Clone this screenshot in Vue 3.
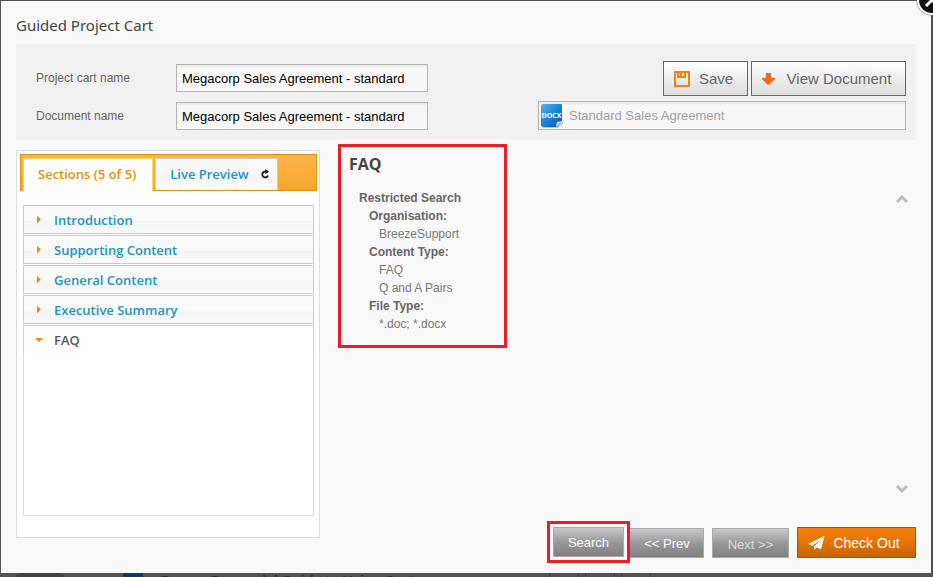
<script setup>
import { ref } from 'vue'

const cartName = ref('Megacorp Sales Agreement - standard')
const documentName = ref('Megacorp Sales Agreement - standard')
const template = ref('Standard Sales Agreement')
const sections = ['Introduction', 'Supporting Content', 'General Content', 'Executive Summary', 'FAQ']
const active = ref('FAQ')
const criteria = [
  { label: 'Organisation:', values: ['BreezeSupport'] },
  { label: 'Content Type:', values: ['FAQ', 'Q and A Pairs'] },
  { label: 'File Type:', values: ['*.doc; *.docx'] },
]
</script>

<template>
  <div class="backdrop">
    <main class="dialog">
      <h1>Guided Project Cart</h1>

      <form class="details" @submit.prevent>
        <div class="names">
          <label for="cart-name">Project cart name</label>
          <input id="cart-name" v-model="cartName" class="field" type="text" />
          <label for="doc-name">Document name</label>
          <input id="doc-name" v-model="documentName" class="field" type="text" />
        </div>
        <div class="document">
          <div class="actions">
            <button type="button" class="light save">
              <svg width="16" height="16" viewBox="0 0 16 16">
                <path fill="#f57f0a" fill-rule="evenodd" d="M0 0H16V16H0ZM2 2V14H14V2H12V7H3V2ZM5 2V5H6V2ZM8 2V5H10V2Z" />
              </svg>
              Save
            </button>
            <button type="button" class="light view">
              <svg width="13" height="12" viewBox="0 0 13 12">
                <path fill="#f26522" d="M4 0H9V5H13V6L7 12H6L0 6V5H4Z" />
              </svg>
              View Document
            </button>
          </div>
          <label class="file">
            <svg width="22" height="24" viewBox="0 0 22 24">
              <defs>
                <linearGradient id="docx" x1="0" y1="0" x2="1" y2="1">
                  <stop offset="0" stop-color="#59b4ef" />
                  <stop offset="0.5" stop-color="#1b83d6" />
                  <stop offset="1" stop-color="#0a4fa8" />
                </linearGradient>
              </defs>
              <path fill="#c4c8cc" d="M2 22H16L22 17V20L17 24H2Z" />
              <path fill="url(#docx)" d="M2 0H20Q21 0 21 1V17L16 23H2Q0 23 0 21V2Q0 0 2 0Z" />
              <path fill="#eef3f8" d="M15 23L16 18L21 17Z" />
              <text x="10.5" y="14" text-anchor="middle" class="docx">DOCX</text>
            </svg>
            <input v-model="template" type="text" aria-label="Document" readonly />
          </label>
        </div>
      </form>

      <div class="body">
        <aside class="sidebar">
          <nav class="tabs">
            <button type="button" class="tab current">Sections (5 of 5)</button>
            <button type="button" class="tab">
              Live Preview
              <svg width="9" height="10" viewBox="0 0 9 10">
                <path d="M5 2.6H4A2.9 2.9 0 1 0 7 6.4" fill="none" stroke="#111" stroke-width="1.7" />
                <path d="M4.4 0L8 2.7L4.4 5.2Z" fill="#111" />
              </svg>
            </button>
          </nav>
          <div class="accordion">
            <button
              v-for="name in sections"
              :key="name"
              type="button"
              class="section"
              :class="{ open: name === active }"
              @click="active = name"
            >
              <span class="mark"></span>{{ name }}
            </button>
            <div class="content"></div>
          </div>
        </aside>

        <section class="pane">
          <div class="results">
            <div class="summary">
              <h2>FAQ</h2>
              <dl>
                <dt class="root">Restricted Search</dt>
                <template v-for="c in criteria" :key="c.label">
                  <dt>{{ c.label }}</dt>
                  <dd v-for="v in c.values" :key="v">{{ v }}</dd>
                </template>
              </dl>
            </div>
            <div class="scroller">
              <button type="button" aria-label="Scroll up">
                <svg width="12" height="10" viewBox="0 0 12 10"><path d="M1 8L6 3L11 8" fill="none" stroke="#bdbdbd" stroke-width="3" /></svg>
              </button>
              <button type="button" aria-label="Scroll down">
                <svg width="12" height="10" viewBox="0 0 12 10"><path d="M1 2L6 7L11 2" fill="none" stroke="#bdbdbd" stroke-width="3" /></svg>
              </button>
            </div>
          </div>
          <footer>
            <button type="button" class="grey search">Search</button>
            <button type="button" class="grey prev">&lt;&lt; Prev</button>
            <button type="button" class="grey next" disabled>Next &gt;&gt;</button>
            <button type="button" class="checkout">
              <svg width="17" height="14" viewBox="0 0 17 14">
                <path fill="#fff" d="M16.5 0L0 8L4.5 9.8L13.5 3L6.2 10.5V14L8.6 11.6L13 13.2Z" />
              </svg>
              Check Out
            </button>
          </footer>
        </section>
      </div>

      <button type="button" class="close" aria-label="Close">
        <svg width="14" height="14" viewBox="0 0 14 14"><path d="M1 1L13 13M13 1L1 13" stroke="#fff" stroke-width="3" /></svg>
      </button>
    </main>
    <div class="underlay">
      <span class="thumb"></span>
      <span class="blue"></span>
      <span class="under-title">Breeze Demand&nbsp; | Guide to Using Cart</span>
      <span class="cells"><i></i><i></i><i></i></span>
    </div>
  </div>
</template>

<style>
body {
  margin: 0;
  background: #545354;
}
</style>

<style scoped>
* {
  box-sizing: border-box;
}

.backdrop {
  display: flex;
  flex-direction: column;
  min-height: 100vh;
  padding: 1px 2px 0 1px;
  overflow: hidden;
  background: #545354;
  font-family: "Liberation Sans", Arial, sans-serif;
  font-size: 12px;
  color: #666;
}

button,
input {
  margin: 0;
  font-family: inherit;
}

button {
  display: flex;
  align-items: center;
  justify-content: center;
  padding: 0;
}

svg {
  display: block;
  flex: none;
}

.dialog {
  position: relative;
  display: flex;
  flex: 1;
  flex-direction: column;
  padding: 14px 15px 15px;
  background: #f9f9f9;
}

h1 {
  margin: 0 0 9px;
  font: 400 15px/20px "Noto Sans", "Open Sans", sans-serif;
  color: #444;
}

.details {
  display: flex;
  justify-content: space-between;
  gap: 20px;
  padding: 17px 10px 10px 20px;
  background: #f1f1f1;
}

.names {
  display: grid;
  grid-template-columns: 140px 252px;
  grid-auto-rows: 28px;
  align-items: center;
  row-gap: 10px;
  padding-top: 3px;
}

.field,
.file {
  border: 1px solid #b5b5b5;
  background: #f8f8f8;
  box-shadow: inset 0 2px 2px #e9e9e9;
}

.field {
  width: 100%;
  height: 28px;
  padding: 0 5px;
  font-size: 13px;
  color: #000;
}

.document {
  display: flex;
  flex-direction: column;
  gap: 5px;
  width: 368px;
}

.actions {
  display: flex;
  justify-content: flex-end;
  gap: 3px;
}

.light {
  height: 35px;
  padding-right: 4px;
  border: 1px solid #666;
  background: linear-gradient(#fff, #dcdcdc);
  font-size: 15px;
  color: #666;
}

.save {
  gap: 9px;
  width: 85px;
}

.view {
  gap: 12px;
  width: 155px;
}

.file {
  display: flex;
  align-items: center;
  gap: 6px;
  height: 29px;
  padding: 0 2px;
}

.file input {
  flex: 1;
  min-width: 0;
  padding: 0;
  border: 0;
  background: none;
  font-size: 13px;
  color: #a0a0a0;
}

.docx {
  font: 700 7px "Open Sans", sans-serif;
  fill: #fff;
}

.body {
  display: flex;
  flex: 1;
  gap: 18px;
}

.sidebar {
  display: flex;
  flex-direction: column;
  width: 304px;
  margin: 10px 0 20px;
  padding: 3px 2px 21px 3px;
  border: 1px solid #ddd;
  background: #fff;
}

.tabs {
  display: flex;
  gap: 2px;
  height: 37px;
  padding: 3px 2px 0;
  border: 1px solid #e78f08;
  background: linear-gradient(#f9b54e, #f6ac38 65%, #f5a72e);
}

.tab {
  gap: 12px;
  height: 32px;
  padding: 0 7px 2px 14px;
  border: 1px solid #ccc;
  border-bottom: 0;
  background: linear-gradient(#f9f9f9 50%, #f5f5f5 50%, #fafafa);
  font: 600 13px "Open Sans", sans-serif;
  color: #1c94c4;
}

.tab.current {
  height: 34px;
  padding: 0 16px 4px 14px;
  border-color: #fbd850;
  background: #fff;
  color: #eb8f00;
}

.accordion {
  display: flex;
  flex: 1;
  flex-direction: column;
  gap: 1px;
  margin: 14px 3px 0;
}

.section {
  justify-content: flex-start;
  gap: 11px;
  height: 29px;
  padding-left: 11px;
  border: 1px solid #ccc;
  background: linear-gradient(#fafafa 55%, #f5f5f5 55%, #f9f9f9);
  font: 600 13px "Open Sans", sans-serif;
  color: #1c94c4;
}

.section.open {
  border-color: #fbd850;
  border-bottom: 0;
  background: #fff;
  color: #555;
}

.mark {
  width: 8px;
  height: 8px;
  background: #ef8c08;
  clip-path: polygon(25% 0, 75% 50%, 25% 100%);
}

.open .mark {
  clip-path: polygon(0 25%, 100% 25%, 50% 75%);
}

.content {
  flex: 1;
  margin-top: -1px;
  border: 1px solid #ddd;
  border-top: 0;
}

.pane {
  display: flex;
  flex: 1;
  flex-direction: column;
  justify-content: space-between;
  padding-top: 4px;
}

.results {
  display: flex;
  justify-content: space-between;
  align-items: flex-start;
}

.summary {
  width: 169px;
  height: 204px;
  padding: 7px 8px;
  border: 3px solid #ed1c24;
}

h2 {
  margin: 0 0 15px;
  font: 700 16px/20px "Open Sans", sans-serif;
  color: #444;
}

dl {
  margin: 0;
  line-height: 18px;
}

dt {
  padding-left: 20px;
  font-weight: 700;
}

.root {
  padding-left: 10px;
}

dd {
  margin: 0;
  padding-left: 30px;
  color: #777;
}

.scroller {
  display: flex;
  flex-direction: column;
  justify-content: space-between;
  height: 300px;
  margin: 50px 8px 0 0;
}

.scroller button {
  border: 0;
  background: none;
}

footer {
  display: flex;
  align-items: flex-end;
  justify-content: flex-end;
  gap: 8px;
}

.grey {
  width: 77px;
  height: 30px;
  border: 1px solid #aaa;
  background: linear-gradient(#c8c8c8, #999 50%, #808080);
  font-size: 13px;
  color: #fff;
}

.search {
  position: relative;
  width: 71px;
  margin: 0 -5px 1px 0;
}

.search::after {
  content: "";
  position: absolute;
  inset: -7px;
  border: 3px solid #ed1c24;
}

.prev {
  padding-left: 3px;
}

.next {
  padding-top: 2px;
  color: #dcdcdc;
}

.checkout {
  gap: 8px;
  width: 119px;
  height: 31px;
  padding-right: 5px;
  border: 1px solid #a0522d;
  background: linear-gradient(#f57f0a, #e57405 50%, #c46200);
  font-size: 14px;
  color: #fff;
}

.close {
  position: absolute;
  top: -16px;
  right: -16px;
  width: 30px;
  height: 30px;
  border: 2px solid #fff;
  border-radius: 50%;
  background: #111;
  box-shadow: 0 0 2px #333;
}

.underlay {
  display: flex;
  align-items: flex-start;
  height: 4px;
  overflow: hidden;
}

.thumb {
  width: 48px;
  height: 4px;
  margin-left: 15px;
  border-radius: 24px 24px 0 0;
  background: #454445;
}

.blue {
  width: 20px;
  height: 4px;
  margin: 0 18px 0 59px;
  background: #123a5c;
}

.under-title {
  flex: none;
  font-size: 14px;
  font-weight: 700;
  line-height: 16px;
  color: #12344f;
}

.cells {
  display: flex;
  gap: 6px;
  margin-left: auto;
  padding-right: 280px;
}

.cells i {
  width: 30px;
  height: 4px;
  border: solid #3c3b3c;
  border-width: 0 1px;
}
</style>
